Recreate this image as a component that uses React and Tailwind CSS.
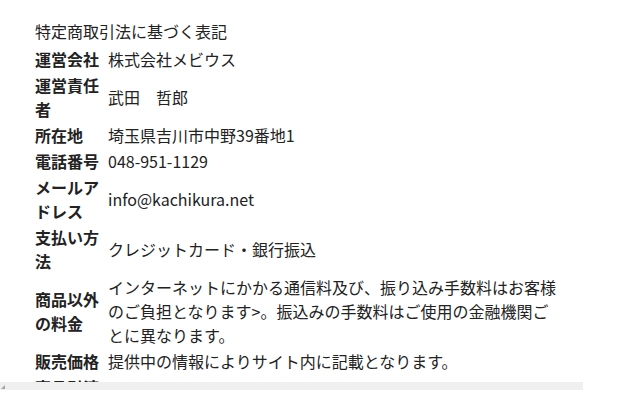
import React from "react";

const rows = [
  ["運営会社", "株式会社メビウス"],
  ["運営責任者", "武田　哲郎"],
  ["所在地", "埼玉県吉川市中野39番地1"],
  ["電話番号", "048-951-1129"],
  ["メールアドレス", "info@kachikura.net"],
  ["支払い方法", "クレジットカード・銀行振込"],
  [
    "商品以外の料金",
    <>
      インターネットにかかる通信料及び、振り込み手数料はお客様
      <br />
      のご負担となります&gt;。振込みの手数料はご使用の金融機関ご
      <br />
      とに異なります。
    </>,
  ],
  ["販売価格", "提供中の情報によりサイト内に記載となります。"],
  ["商品引渡し時期", "決済完了後、すぐにご利用いただけます。"],
];

export default function App() {
  return (
    <div
      className="w-[630px] h-[407px] bg-white text-[#222] text-[16px] leading-6"
      style={{ fontFamily: '"Noto Sans CJK JP", "Noto Sans", sans-serif' }}
    >
      <div className="w-[583px]">
        <div className="h-[382px] overflow-hidden pt-[19px] pl-[35px]">
          <div>特定商取引法に基づく表記</div>
          <table className="table-fixed w-[525px] mt-[3px]">
            <colgroup>
              <col className="w-[72px]" />
              <col />
            </colgroup>
            <tbody>
              {rows.map(([k, v], i) => (
                <tr key={i}>
                  <th className="text-left align-middle font-bold pl-0 pr-[7px] py-[1px]">
                    {k}
                  </th>
                  <td className="align-middle px-[1px] py-[1px]">{v}</td>
                </tr>
              ))}
            </tbody>
          </table>
        </div>
        <div className="h-[8px] bg-[#f0f0f0] relative">
          <svg
            className="absolute left-[1px] top-[2px]"
            width="4"
            height="5"
            viewBox="0 0 4 5"
          >
            <polygon points="0,5 4,5 4,1" fill="#a3a3a3" />
          </svg>
        </div>
      </div>
    </div>
  );
}
